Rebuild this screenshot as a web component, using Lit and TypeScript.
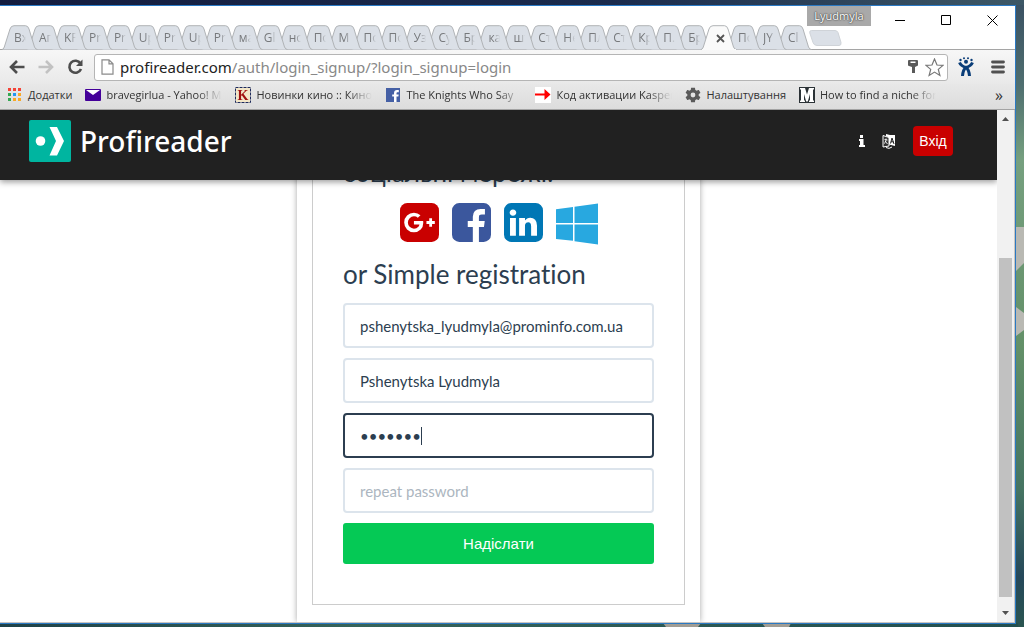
import { LitElement, html, svg, css } from "lit";
import { customElement } from "lit/decorators.js";

const TABS = [
  "Вх", "Аг", "KF", "Pr", "Pr", "Up", "Pr", "Up", "Pr", "ма", "Gl", "но", "По", "М",
  "По", "По", "Уз", "Су", "Бр", "ка", "шт", "Ст", "Не", "Пл", "Ст", "Кр", "П.", "Бр",
  "", "По", "JY", "Cl",
];
const ACTIVE = 28;

const appsIcon = svg`<svg class="ico" viewBox="0 0 16 16" aria-hidden="true">
  <path fill="#f44336" d="M1 1h3v3H1zM6 1h3v3H6zM11 1h3v3h-3z"/>
  <path fill="#34a853" d="M1 6h3v3H1zM1 11h3v3H1z"/><path fill="#2196f3" d="M6 6h3v3H6z"/>
  <path fill="#f9a825" d="M11 6h3v3h-3zM6 11h3v3H6zM11 11h3v3h-3z"/></svg>`;
const mailIcon = svg`<svg class="ico" viewBox="0 0 16 16" aria-hidden="true">
  <rect y="2" width="16" height="12" rx="1" fill="#440099"/><path d="M1 3l7 5 7-5z" fill="#fff"/></svg>`;
const kinoIcon = svg`<svg class="ico" viewBox="0 0 16 16" aria-hidden="true">
  <rect x=".5" y=".5" width="15" height="15" fill="#f3e6c8" stroke="#1d2a5c" stroke-dasharray="3 1"/>
  <text x="8" y="13" text-anchor="middle" font-family="Liberation Serif, serif" font-weight="700" font-size="14" fill="#a01010">K</text></svg>`;
const fbIcon = svg`<svg class="ico" viewBox="0 0 16 16" aria-hidden="true">
  <rect x="1" y="1" width="14" height="14" fill="#4560a5"/>
  <path fill="#fff" d="M9 15V9.600H7.200V7.500H9V6.200C9 4 10.200 3 12 3h1.800v2.200h-1.200c-.8 0-1.100.4-1.100 1.100v1.200h2.200l-.3 2.100h-1.900V15z"/></svg>`;
const arrowIcon = svg`<svg class="ico" viewBox="0 0 16 16" aria-hidden="true">
  <rect width="16" height="16" fill="#fff"/><path fill="#f00" d="M0 6.500h9.500V2l6 5.500-6 5.500V8.500H0z"/></svg>`;
const gearIcon = svg`<svg class="ico" viewBox="0 0 24 24" aria-hidden="true">
  <path fill="#5a5a5a" d="M20.500 13.100c.05-.36.08-.73.080-1.100s-.03-.74-.08-1.100l2.300-1.800c.2-.17.27-.46.130-.7l-2.200-3.800c-.14-.24-.42-.33-.67-.24l-2.740 1.100c-.57-.44-1.190-.8-1.860-1.080L15 1.500c-.04-.26-.27-.5-.54-.5h-4.900c-.27 0-.5.2-.54.500l-.4 2.900c-.68.280-1.300.65-1.860 1.080L4 4.360c-.25-.1-.53 0-.67.24L1.100 8.400c-.14.24-.08.53.13.700l2.300 1.800c-.05.360-.08.730-.08 1.100s.03.740.080 1.100l-2.300 1.800c-.2.170-.27.460-.13.700l2.230 3.800c.14.240.42.330.67.240l2.740-1.100c.57.440 1.190.8 1.860 1.080l.4 2.900c.04.260.27.480.540.480h4.900c.27 0 .5-.2.540-.48l.4-2.900c.68-.28 1.300-.65 1.860-1.080l2.740 1.100c.25.100.53 0 .67-.24l2.230-3.800c.14-.24.080-.53-.13-.7zM12 15.600a3.600 3.600 0 1 1 0-7.200 3.600 3.600 0 0 1 0 7.200z"/></svg>`;
const mIcon = svg`<svg class="ico" viewBox="0 0 16 16" aria-hidden="true">
  <rect x=".5" y=".5" width="15" height="15" fill="#2b3236" stroke="#2b3236"/>
  <path fill="#fff" d="M1 1h5l2 6.500L10 1h5v1.500h-1v11h1V15h-5v-1.500h1V7l-2.200 7.500H7.200L5 7v6.500h1V15H1v-1.500h1v-11H1z"/></svg>`;

const BOOKMARKS = [
  { icon: appsIcon, text: "Додатки", long: false },
  { icon: mailIcon, text: "bravegirlua - Yahoo! Mail", long: true },
  { icon: kinoIcon, text: "Новинки кино :: Кинозал", long: true },
  { icon: fbIcon, text: "The Knights Who Say", long: true },
  { icon: arrowIcon, text: "Код активации Kaspersky", long: true },
  { icon: gearIcon, text: "Налаштування", long: false },
  { icon: mIcon, text: "How to find a niche for you", long: true },
];

const SQUARE = "v960q0 119-84.500 203.500T1248 1536H288q-119 0-203.500-84.500T0 1248V288Q0 169 84.500 84.500T288 0h960q119 0 203.500 84.500T1536 288z";

@customElement("browser-chrome")
class BrowserChrome extends LitElement {
  static styles = css`
    :host { display: block; font-family: "Open Sans", "Noto Sans", sans-serif; color: #333; }
    button { border: 0; padding: 0; background: none; font: inherit; color: inherit; display: flex; align-items: center; justify-content: center; }
    svg { display: block; flex: none; }
    .top { display: flex; align-items: flex-end; height: 44px; background: #fff; position: relative; box-shadow: inset 0 -1px #a5a5a5; padding-left: 2px; }
    .tabs { display: flex; width: 799px; height: 25px; flex: none; }
    .tab { flex: 1 1 0; min-width: 0; position: relative; display: block; text-align: left; }
    .shape { position: absolute; left: 0; top: 0; }
    .label { position: absolute; left: 12px; top: 4px; width: 12px; overflow: hidden; white-space: nowrap; font-size: 12px; line-height: 18px; color: #77797c;
      -webkit-mask-image: linear-gradient(90deg, #000 50%, transparent); mask-image: linear-gradient(90deg, #000 50%, transparent); }
    .close { position: absolute; left: 15px; top: 9px; }
    .newtab { margin: 0 0 4px 8px; }
    .window { position: absolute; right: 0; top: 0; display: flex; align-items: flex-start; gap: 6px; }
    .controls { display: flex; }
    .user { background: #a9a9a9; color: #fff; font-size: 11px; line-height: 20px; width: 64px; text-align: center; text-shadow: 0 0 2px #333, 0 0 1px #333; }
    .wbtn { width: 46px; height: 28px; }
    .bar { display: flex; align-items: center; height: 34px; padding: 0 10px 0 7px; background: linear-gradient(#f7f7f7, #e9e9e9); }
    .nav { width: 20px; height: 20px; margin-right: 9px; }
    .url { flex: 1; display: flex; align-items: center; height: 25px; border: 1px solid #b5b5b5; border-radius: 3px; background: #fff; padding: 0 3px 0 6px; gap: 6px; }
    .address { flex: 1; min-width: 0; font: 15px/24px "Noto Sans", sans-serif; color: #888; white-space: nowrap; }
    .address b { font-weight: 400; color: #222; }
    .ext { width: 20px; margin: 0 15px 0 8px; }
    .marks { display: flex; align-items: center; gap: 13px; height: 21px; padding: 0 12px 4px 7px; background: linear-gradient(#e8e8e8, #dcdcdc); border-bottom: 1px solid #a3a3a3; }
    .mark { display: flex; align-items: center; gap: 5px; color: #333; font-size: 11px; line-height: 18px; text-decoration: none; white-space: nowrap; overflow: hidden; flex: none; }
    .long { width: 137px; -webkit-mask-image: linear-gradient(90deg, #000 82%, transparent); mask-image: linear-gradient(90deg, #000 82%, transparent); }
    .ico { width: 16px; height: 16px; }
    .more { margin-left: auto; font-size: 16px; line-height: 18px; }
  `;

  render() {
    return html`
      <div class="top">
        <div class="tabs" role="tablist">
          ${TABS.map((t, i) => {
            const active = i === ACTIVE;
            return html`<button class="tab" role="tab" aria-label=${t || "Profireader"} aria-selected=${active} style="z-index:${active ? 60 : 40 - i}">
              <svg class="shape" width="36" height="25" viewBox="0 0 36 25">
                <path d="M0 24.500Q1.500 24.500 2.300 22L8 4Q9 .7 12 .7H23.500Q26 .7 27 4L32.500 22Q33.500 24.500 35.500 24.500" fill=${active ? "#fafafa" : "#dbe0e7"} stroke="#b0b3b6"/>
                ${active ? svg`<path d="M1 24.500H35" stroke="#fafafa"/>` : ""}
              </svg>
              ${active
                ? html`<svg class="close" width="9" height="9" viewBox="0 0 9 9"><path d="M1 1l7 7M8 1l-7 7" stroke="#555" stroke-width="1.800"/></svg>`
                : html`<span class="label">${t}</span>`}
            </button>`;
          })}
        </div>
        <button class="newtab" aria-label="New tab">
          <svg width="33" height="16" viewBox="0 0 33 16"><path d="M2.500.5H26q2 0 3 2l3 10q.5 3-2 3H8q-3 0-4-3L.8 3Q.2.5 2.500.5z" fill="#dbe0e7" stroke="#cfd3d8"/></svg>
        </button>
        <div class="window">
          <span class="user">Lyudmyla</span>
          <div class="controls">
            <button class="wbtn" aria-label="Minimize"><svg width="11" height="11"><path d="M0 5.500h10" stroke="#000"/></svg></button>
            <button class="wbtn" aria-label="Maximize"><svg width="10" height="10"><path d="M.5.5h9v9h-9z" fill="none" stroke="#000"/></svg></button>
            <button class="wbtn" aria-label="Close"><svg width="11" height="11"><path d="M.5.5l10 10M10.500.5l-10 10" stroke="#000"/></svg></button>
          </div>
        </div>
      </div>
      <div class="bar">
        <button class="nav" aria-label="Back"><svg width="18" height="18" viewBox="0 0 18 18"><path d="M16.500 9H3M9 3L3 9l6 6" fill="none" stroke="#4d4d4d" stroke-width="2.600"/></svg></button>
        <button class="nav" aria-label="Forward"><svg width="18" height="18" viewBox="0 0 18 18"><path d="M1.500 9H15M9 3l6 6-6 6" fill="none" stroke="#c2c2c2" stroke-width="2.600"/></svg></button>
        <button class="nav" aria-label="Reload"><svg width="18" height="18" viewBox="0 0 18 18"><path d="M14.500 5.500A6 6 0 1 0 15 11" fill="none" stroke="#4d4d4d" stroke-width="2.600"/><path d="M16.500 1.500V8H10z" fill="#4d4d4d"/></svg></button>
        <div class="url">
          <svg width="13" height="16" viewBox="0 0 13 16"><path d="M1 .8h7l4 4v10.400H1zM8 .8v4h4" fill="#fff" stroke="#8a8a8a" stroke-width="1.200"/></svg>
          <span class="address"><b>profireader.com</b>/auth/login_signup/?login_signup=login</span>
          <svg width="12" height="16" viewBox="0 0 12 16"><path fill="#5a5a5a" fill-rule="evenodd" d="M2 1h8q1 0 1 1v4q0 1-1 1L8 8v6H5V8L2 7Q1 7 1 6V2q0-1 1-1zM3.500 2.500V4h5V2.500z"/></svg>
          <svg width="19" height="19" viewBox="0 0 19 19"><path d="M9.500 1l2.500 6 6 .4-4.700 4 1.600 6.100-5.400-3.400-5.400 3.400 1.600-6.100-4.700-4 6-.4z" fill="#fff" stroke="#777" stroke-width="1.200"/></svg>
        </div>
        <button class="ext" aria-label="Extension"><svg width="16" height="20" viewBox="0 0 16 20"><g fill="#0a3d78"><circle cx="2.500" cy="3" r="1.200"/><circle cx="6" cy="1.200" r="1"/><circle cx="10" cy="1.200" r="1"/><circle cx="13.500" cy="3" r="1.200"/><circle cx="8" cy="4.800" r="2"/></g><path d="M1.500 5.500Q3 9 8 10.500q3 2 3.500 8.500M14.500 5.500Q13 9 8 10.500q-3 2-3.500 8.500" fill="none" stroke="#0a3d78" stroke-width="3"/></svg></button>
        <button aria-label="Menu"><svg width="14" height="14" viewBox="0 0 14 14"><path d="M1.500 2h11M1.500 7h11M1.500 12h11" stroke="#505050" stroke-width="2.800" stroke-linecap="round"/></svg></button>
      </div>
      <nav class="marks">
        ${BOOKMARKS.map((b) => html`<a class="mark ${b.long ? "long" : ""}" href="#">${b.icon}<span>${b.text}</span></a>`)}
        <button class="more" aria-label="More bookmarks">»</button>
      </nav>`;
  }
}

@customElement("login-page")
class LoginPage extends LitElement {
  static styles = css`
    * { box-sizing: border-box; }
    :host { display: flex; flex-direction: column; flex: 1; min-width: 0; min-height: 0; background: #fff; overflow: hidden; color: #2c3e50; font-family: Lato, sans-serif; font-variant-ligatures: none; }
    svg { display: block; }
    .head { height: 70px; flex: none; display: flex; align-items: center; padding: 0 44px 8px 29px; background: #212121; color: #fff; box-shadow: 0 2px 6px rgba(0, 0, 0, .4); position: relative; z-index: 1; }
    .brand { display: flex; align-items: center; gap: 9px; color: #fff; text-decoration: none; margin-right: auto; font: 500 28px/42px "Noto Sans", sans-serif; }
    .icon { border: 0; padding: 0; background: none; display: flex; }
    .lang { margin: 0 17px; }
    .enter { border: 0; border-radius: 4px; background: #c90000; color: #fff; width: 40px; height: 30px; padding: 0; font: 14px/20px "Liberation Sans", sans-serif; }
    .view { flex: 1; min-height: 0; display: flex; flex-direction: column; justify-content: flex-end; align-items: center; overflow: hidden; }
    .card { width: 403px; max-width: 100%; flex: none; padding: 15px 15px 17px; box-shadow: 0 0 6px rgba(0, 0, 0, .35); }
    .box { border: 1px solid #ccc; padding: 20px 30px 40px; }
    h2 { margin: 0; font-size: 26px; line-height: 32px; font-weight: 400; }
    .social { display: flex; justify-content: center; gap: 13px; margin: 15px 0 13px; }
    .social a { display: block; }
    form { display: flex; flex-direction: column; gap: 10px; margin-top: 13px; }
    .field { display: block; position: relative; }
    input { display: block; width: 100%; height: 45px; border: 2px solid #dce4ec; border-radius: 4px; padding: 0 15px; font: 15px/21px Lato, sans-serif; font-variant-ligatures: none; color: #2c3e50; background: #fff; outline: 0; }
    input::placeholder { color: #acb6c0; opacity: 1; }
    .current input { border-color: #2c3e50; }
    .caret { position: absolute; left: 78px; top: 14px; width: 1px; height: 18px; background: #2c3e50; }
    .send { height: 41px; border: 0; border-radius: 3px; background: #05c955; color: #fff; font: 15px/21px "Liberation Sans", sans-serif; }
  `;

  render() {
    return html`
      <header class="head">
        <a class="brand" href="#">
          <svg width="42" height="42" viewBox="0 0 42 42"><rect width="42" height="42" rx="2" fill="#00b5a0"/><circle cx="11.500" cy="21" r="4.800" fill="#fff"/><path d="M20.500 7h7.500l7 14-7 14.500h-7.500l6.500-14.500z" fill="#fff"/></svg>
          <span>Profireader</span>
        </a>
        <button class="icon" aria-label="Info"><svg width="6" height="12" viewBox="0 0 6 12"><path fill="#fff" d="M1 0h3v3H1zM0 4h4.500v6H6v2H0v-2h1V6H0z"/></svg></button>
        <button class="icon lang" aria-label="Language"><svg width="14" height="16" viewBox="0 0 14 16"><path d="M1 2.500L7 4.500v8.500L1 14z" fill="#333" stroke="#fff"/><path d="M2.500 6.500l3 .5M4 5.500v1.500q0 2.500-2 3.500M3 8l2.500 3" stroke="#fff" fill="none" stroke-width=".9"/><path d="M4 1l4 1 5 0V13l-6-1.500V4.500L4 3z" fill="#fff"/><path d="M8.500 10.500L10 5l2 6M9 8.800h2.500" fill="none" stroke="#222"/><path d="M4 14.500q3 2 6-.5" stroke="#fff" fill="none"/></svg></button>
        <button class="enter">Вхід</button>
      </header>
      <main class="view">
        <section class="card">
          <div class="box">
            <h2>соціальні мережі:</h2>
            <div class="social">
              <a href="#" aria-label="Google+"><svg width="39" height="39" viewBox="0 0 1536 1536"><rect width="1536" height="1536" rx="288" fill="#c90000"/><path fill="#fff" d="M917 777q0-26-6-64H549v132h217q-3 24-16.500 50T712 948t-66.500 44.500T549 1010q-99 0-169-71t-70-171 70-171 169-71q92 0 153 59l104-101Q698 384 549 384q-160 0-272 112.500T165 768t112 271.500T549 1152q165 0 266.500-105T917 777zm345 46h109V713h-109V603h-110v110h-110v110h110v110h110V823z"/></svg></a>
              <a href="#" aria-label="Facebook"><svg width="39" height="39" viewBox="0 0 1536 1536"><path fill="#3b579d" d="M1248 0q119 0 203.500 84.500T1536 288v960q0 119-84.500 203.500T1248 1536h-188V941h199l30-232h-229V561q0-56 23.500-84t91.500-28l122-1V241q-63-9-178-9-136 0-217.500 80T820 538v171H620v232h200v595H288q-119 0-203.500-84.500T0 1248V288Q0 169 84.500 84.500T288 0h960z"/></svg></a>
              <a href="#" aria-label="LinkedIn"><svg width="39" height="39" viewBox="0 0 1536 1536"><path fill="#0077b5" d=${"M237 1286h231V592H237v694zm246-908q-1-52-36-86t-93-34-94.500 34-36.500 86q0 51 35.500 85.500T351 498h1q59 0 95-34.500t36-85.500zm585 908h231V888q0-154-73-233t-193-79q-136 0-209 117h2V592H595q3 66 0 694h231V898q0-38 7-56 15-35 45-59.500t74-24.500q116 0 116 157v371zm468-998" + SQUARE}></path></svg></a>
              <a href="#" aria-label="Windows"><svg width="42" height="42" viewBox="0 0 42 42"><path fill="#28a8e0" d="M0 6.300L17 4v16H0zM18.500 3.700L42 .5V20H18.500zM0 21.500h17v16.300L0 36zM18.500 21.500H42v20l-23.500-3.300z"/></svg></a>
            </div>
            <h2>or Simple registration</h2>
            <form @submit=${(e: Event) => e.preventDefault()}>
              <label class="field"><input type="email" aria-label="email" .value=${"pshenytska_lyudmyla@prominfo.com.ua"} /></label>
              <label class="field"><input type="text" aria-label="name" .value=${"Pshenytska Lyudmyla"} /></label>
              <label class="field current"><input type="password" aria-label="password" .value=${"1234567"} /><span class="caret"></span></label>
              <label class="field"><input type="password" aria-label="repeat password" placeholder="repeat password" /></label>
              <button class="send">Надіслати</button>
            </form>
          </div>
        </section>
      </main>`;
  }
}

@customElement("app-root")
class AppRoot extends LitElement {
  static styles = css`
    * { box-sizing: border-box; }
    :host { display: flex; height: 100vh; padding: 5px 8px 3px 0; box-sizing: border-box; position: relative; background: linear-gradient(90deg, #131c3f, #1a2b4d 60%, #3d5866); }
    .wall { position: absolute; inset: 0; width: 100%; height: 100%; }
    .frame { position: relative; flex: 1; min-width: 0; display: flex; flex-direction: column; border: 1px solid #2a79c4; border-left: 0; background: #fff; }
    .content { flex: 1; min-height: 0; display: flex; border-right: 1px solid #c9c5c0; border-bottom: 1px solid #c9c5c0; }
    .scroll { width: 17px; flex: none; background: #f1f1f1; display: flex; flex-direction: column; align-items: center; padding: 7px 2px; }
    .before { flex: 137; }
    .thumb { flex: 338; width: 13px; background: #c1c1c1; }
    .after { flex: 14; }
    .scroll svg { display: block; flex: none; }
  `;

  render() {
    return html`
      <svg class="wall" viewBox="0 0 1024 627" preserveAspectRatio="none" aria-hidden="true">
        <defs>
          <linearGradient id="side" x1="0" y1="0" x2="0" y2="1">
            <stop offset="0" stop-color="#3b5263"/><stop offset=".13" stop-color="#4f6f70"/><stop offset=".25" stop-color="#76a07f"/>
            <stop offset=".55" stop-color="#639068"/><stop offset=".78" stop-color="#457462"/><stop offset=".92" stop-color="#25485a"/><stop offset="1" stop-color="#2a5550"/>
          </linearGradient>
          <linearGradient id="foot"><stop offset="0" stop-color="#1f4248"/><stop offset=".35" stop-color="#37645a"/><stop offset="1" stop-color="#234f4f"/></linearGradient>
        </defs>
        <path fill="url(#side)" d="M1016 5h8v622h-8z"/>
        <path fill="#b9b9b3" d="M1016 227h8v36l-8 8zM1016 307l8 6v17l-8 6z"/>
        <path fill="url(#foot)" d="M0 623h1018v4H0z"/>
        <path fill="#a19d94" d="M663 623h38l-3 4h-32zM762 623h29l-2 4h-24z"/>
      </svg>
      <div class="frame">
        <browser-chrome></browser-chrome>
        <div class="content">
          <login-page></login-page>
          <div class="scroll" aria-hidden="true">
            <svg width="7" height="4"><path d="M0 4l3.500-4L7 4z" fill="#505050"/></svg>
            <div class="before"></div><div class="thumb"></div><div class="after"></div>
            <svg width="7" height="4"><path d="M0 0l3.500 4L7 0z" fill="#505050"/></svg>
          </div>
        </div>
      </div>`;
  }
}
